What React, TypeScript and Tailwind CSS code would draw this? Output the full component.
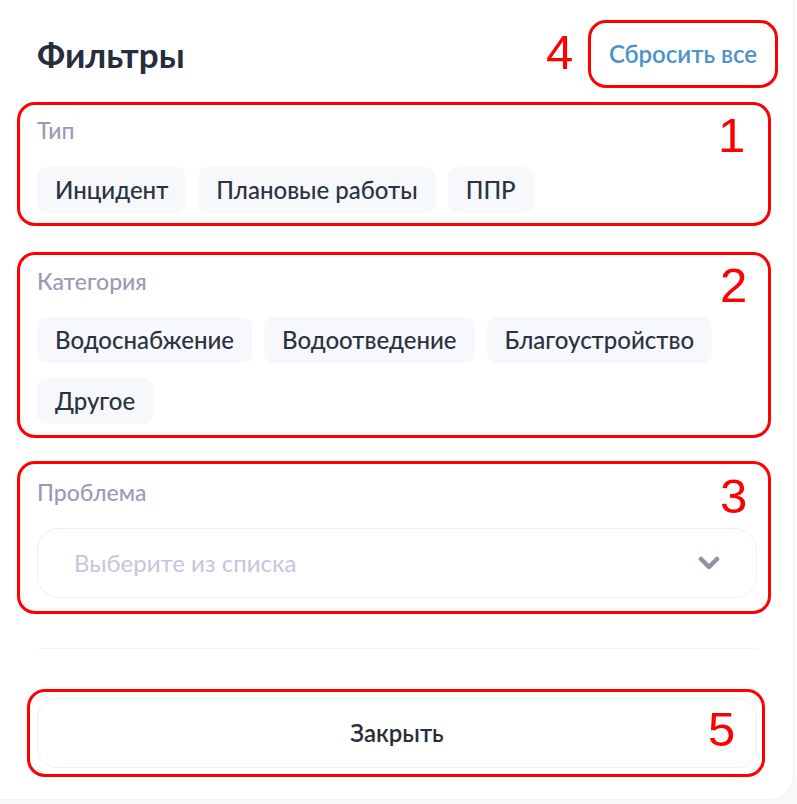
const typeOptions = ["Инцидент", "Плановые работы", "ППР"];
const categoryOptions = ["Водоснабжение", "Водоотведение", "Благоустройство", "Другое"];

function Chip({ label }: { label: string }) {
  return (
    <button className="h-[46px] px-[18px] rounded-[10px] bg-[#f6f8fb] text-[24px] font-medium text-[#2b3342] leading-none">
      {label}
    </button>
  );
}

function SectionLabel({ children }: { children: string }) {
  return <div className="text-[23px] leading-[28px] font-medium text-[#9a9ab6]">{children}</div>;
}

// red number of the markup, drawn over the box it belongs to
function Num({ n, className }: { n: string; className: string }) {
  return (
    <span
      className={`absolute text-[49px] leading-none text-[#ff0000] pointer-events-none ${className}`}
      style={{ fontFamily: '"Liberation Sans", Arial, sans-serif' }}
    >
      {n}
    </span>
  );
}

export default function App() {
  return (
    <div className="w-[797px] h-[804px] bg-[#f8f9fb]" style={{ fontFamily: "Lato, 'Noto Sans', sans-serif" }}>
      <div className="w-[794px] h-[800px] bg-white rounded-br-[24px] border-r border-b border-[#eef1f5] pl-[37px] pr-[36px] pt-[20px] flex flex-col">
        <div className="flex items-center justify-between">
          <h1 className="text-[35px] leading-[40px] font-bold text-[#262e3b]">Фильтры</h1>
          <div className="relative mr-[-21px] h-[68px] px-[18px] flex items-center border-[3px] border-[#ff0000] rounded-[18px]">
            <button className="text-[24px] font-semibold text-[#4b93cb]">Сбросить все</button>
            <Num n="4" className="left-[-45px] top-[5px]" />
          </div>
        </div>

        <div className="relative mt-[14px] ml-[-20px] mr-[-14px] border-[3px] border-[#ff0000] rounded-[18px] pl-[17px] pt-[11px] pb-[10px]">
          <SectionLabel>Тип</SectionLabel>
          <div className="mt-[23px] flex flex-wrap gap-x-[12px] gap-y-[15px]">
            {typeOptions.map((o) => (
              <Chip key={o} label={o} />
            ))}
          </div>
          <Num n="1" className="left-[698px] top-[6px]" />
        </div>

        <div className="relative mt-[26px] ml-[-20px] mr-[-14px] border-[3px] border-[#ff0000] rounded-[18px] pl-[17px] pr-[11px] pt-[12px] pb-[11px]">
          <SectionLabel>Категория</SectionLabel>
          <div className="mt-[22px] flex flex-wrap gap-x-[12px] gap-y-[15px]">
            {categoryOptions.map((o) => (
              <Chip key={o} label={o} />
            ))}
          </div>
          <Num n="2" className="left-[700px] top-[6px]" />
        </div>

        <div className="relative mt-[23px] ml-[-20px] mr-[-14px] border-[3px] border-[#ff0000] rounded-[18px] pl-[17px] pr-[11px] pt-[14px] pb-[13px]">
          <SectionLabel>Проблема</SectionLabel>
          <div className="mt-[22px] h-[70px] rounded-[22px] border border-[#e5f2f9] flex items-center justify-between pl-[36px] pr-[36px]">
            <span className="text-[24px] text-[#c5c5dd]">Выберите из списка</span>
            <svg width="22" height="14" viewBox="0 0 22 14" fill="none">
              <path d="M3 3 L11 11 L19 3" stroke="#9090ad" strokeWidth="4.5" strokeLinecap="round" strokeLinejoin="round" />
            </svg>
          </div>
          <Num n="3" className="left-[700px] top-[8px]" />
        </div>

        <div className="mt-[34px] h-px bg-[#eef4f8]" />

        <div className="relative mt-[40px] ml-[-10px] mr-[-8px] border-[3px] border-[#ff0000] rounded-[18px] pl-[7px] pr-[5px] py-[6px]">
          <button className="w-full h-[70px] rounded-[20px] border border-[#e5f2f9] text-[24px] font-semibold text-[#262e3b]">
            Закрыть
          </button>
          <Num n="5" className="left-[678px] top-[13px]" />
        </div>
      </div>
    </div>
  );
}
